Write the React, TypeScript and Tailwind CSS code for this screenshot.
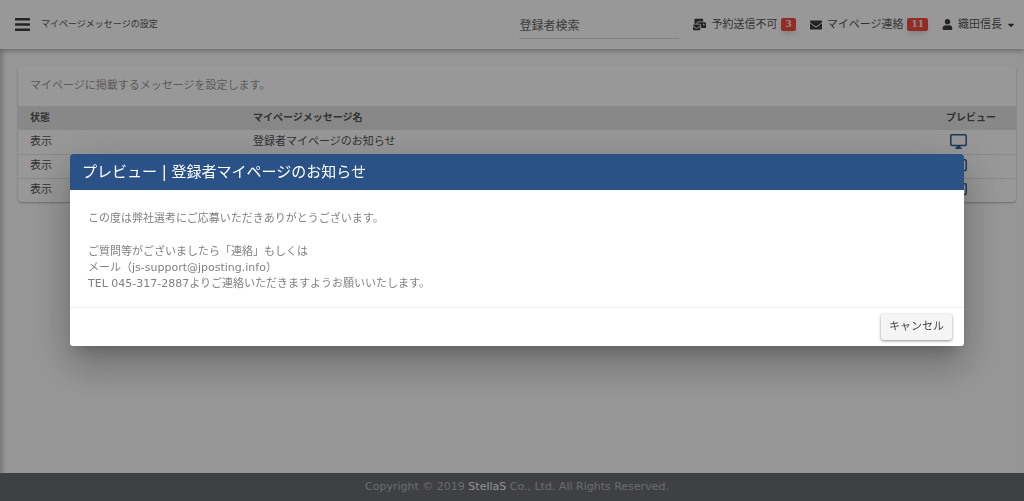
import { FaCaretDown, FaEnvelope, FaMailBulk, FaUser } from 'react-icons/fa';

interface Message {
  id: number;
  status: string;
  name?: string;
}

const MESSAGES: Message[] = [
  { id: 1, status: '表示', name: '登録者マイページのお知らせ' },
  { id: 2, status: '表示' },
  { id: 3, status: '表示' },
];

function MenuIcon() {
  return (
    <svg width="15" height="13" viewBox="0 0 15 13" fill="currentColor">
      <rect width="15" height="2.4" rx="0.5" />
      <rect y="5.3" width="15" height="2.4" rx="0.5" />
      <rect y="10.6" width="15" height="2.4" rx="0.5" />
    </svg>
  );
}

function MonitorIcon() {
  return (
    <svg width="17" height="15" viewBox="0 0 17 15" fill="none" stroke="currentColor">
      <rect x="0.8" y="0.8" width="15.4" height="10.6" rx="1" strokeWidth="1.5" />
      <path d="M7 11h3l.5 2.500h1.200V15H5.300v-1.500h1.200z" fill="currentColor" stroke="none" />
    </svg>
  );
}

function Badge({ count }: { count: number }) {
  return (
    <span className="rounded-xs bg-[#f44a3e] px-1 font-['DejaVu_Serif',serif] text-[9px] leading-[13px] font-bold text-[#eee] shadow-md">
      {count}
    </span>
  );
}

function Header() {
  return (
    <header className="flex h-[49px] items-center bg-[#fdfdfd] pr-2 pl-[15px] text-[#555] shadow-[0_2px_5px_rgba(0,0,0,0.3)]">
      <button type="button" aria-label="メニュー" className="text-[#3c3c3c]">
        <MenuIcon />
      </button>
      <h1 className="ml-[11px] text-[9px]">マイページメッセージの設定</h1>
      <input
        type="search"
        aria-label="登録者検索"
        placeholder="登録者検索"
        className="mt-[3px] ml-auto h-[26px] w-40 border-b border-[#dadada] text-[12px] placeholder:text-[#666]"
      />
      <nav className="ml-[14px] flex items-center gap-[14px] text-[11px] leading-4">
        <a href="#reserved" className="flex items-center gap-1">
          <FaMailBulk size={13} className="mr-px text-[#3c3c3c]" />
          予約送信不可
          <Badge count={3} />
        </a>
        <a href="#contact" className="flex items-center gap-1">
          <FaEnvelope size={12} className="mr-px text-[#3c3c3c]" />
          マイページ連絡
          <Badge count={11} />
        </a>
        <button type="button" className="flex items-center gap-1">
          <FaUser size={11} className="mr-px text-[#3c3c3c]" />
          織田信長
          <FaCaretDown size={10} className="text-[#3c3c3c]" />
        </button>
      </nav>
    </header>
  );
}

function MessageTable() {
  return (
    <section className="rounded-sm bg-[#fdfdfd] shadow-[0_1px_2px_rgba(0,0,0,0.3)]">
      <p className="px-3 py-3 text-[11px] leading-4 text-[#999]">マイページに掲載するメッセージを設定します。</p>
      <table className="w-full table-fixed text-left text-[11px] leading-[22px] text-[#555]">
        <thead>
          <tr className="h-6 bg-[#e3e3e3] text-[10px]">
            <th className="w-[223px] px-3 font-bold">状態</th>
            <th className="px-3 font-bold">マイページメッセージ名</th>
            <th className="w-[82px] px-3 font-bold">プレビュー</th>
          </tr>
        </thead>
        <tbody>
          {MESSAGES.map((message) => (
            <tr key={message.id} className="h-6 border-b border-[#e4e4e4] last:border-b-0">
              <td className="px-3">{message.status}</td>
              <td className="px-3">{message.name}</td>
              <td className="px-4">
                <button type="button" aria-label="プレビュー" className="block text-[#345a92]">
                  <MonitorIcon />
                </button>
              </td>
            </tr>
          ))}
        </tbody>
      </table>
    </section>
  );
}

function PreviewDialog() {
  return (
    <div className="fixed inset-0 bg-black/40 pt-[154px] pr-[60px] pl-[70px]">
      <div
        role="dialog"
        aria-modal="true"
        aria-labelledby="preview-title"
        className="overflow-hidden rounded-[3px] bg-white shadow-[0_11px_15px_-7px_rgba(0,0,0,0.2),0_24px_38px_3px_rgba(0,0,0,0.14),0_9px_46px_8px_rgba(0,0,0,0.12)]"
      >
        <h2 id="preview-title" className="bg-[#2a5286] px-3 text-[15px] leading-9 text-white">
          プレビュー | 登録者マイページのお知らせ
        </h2>
        <div className="flex flex-col gap-[17px] px-[18px] pt-[21px] pb-[15px] text-[11px] leading-4 text-[#808080]">
          <p>この度は弊社選考にご応募いただきありがとうございます。</p>
          <p>
            ご質問等がございましたら「連絡」もしくは
            <br />
            メール（js-support@jposting.info）
            <br />
            TEL 045-317-2887よりご連絡いただきますようお願いいたします。
          </p>
        </div>
        <div className="flex justify-end border-t border-[#eee] px-3 py-[6px]">
          <button
            type="button"
            className="rounded-[3px] bg-[#f5f5f5] px-2 text-[11px] leading-[26px] text-[#444] shadow-[0_1px_3px_rgba(0,0,0,0.45)]"
          >
            キャンセル
          </button>
        </div>
      </div>
    </div>
  );
}

export default function App() {
  return (
    <div className="flex min-h-screen flex-col bg-[#fbfbfb] font-['DejaVu_Sans','Noto_Sans_CJK_JP',sans-serif] shadow-[inset_3px_0_4px_rgba(0,0,0,0.2)]">
      <Header />
      <main className="flex-1 pt-[17px] pr-2 pb-4 pl-[18px]">
        <MessageTable />
      </main>
      <footer className="bg-[#686b70] pl-[10px] text-center text-[11px] leading-7 text-[#b4b4b4]">
        Copyright © 2019{' '}
        <a href="#stellas" className="text-[#f2f2f2]">
          StellaS
        </a>{' '}
        Co., Ltd. All Rights Reserved.
      </footer>
      <PreviewDialog />
    </div>
  );
}
